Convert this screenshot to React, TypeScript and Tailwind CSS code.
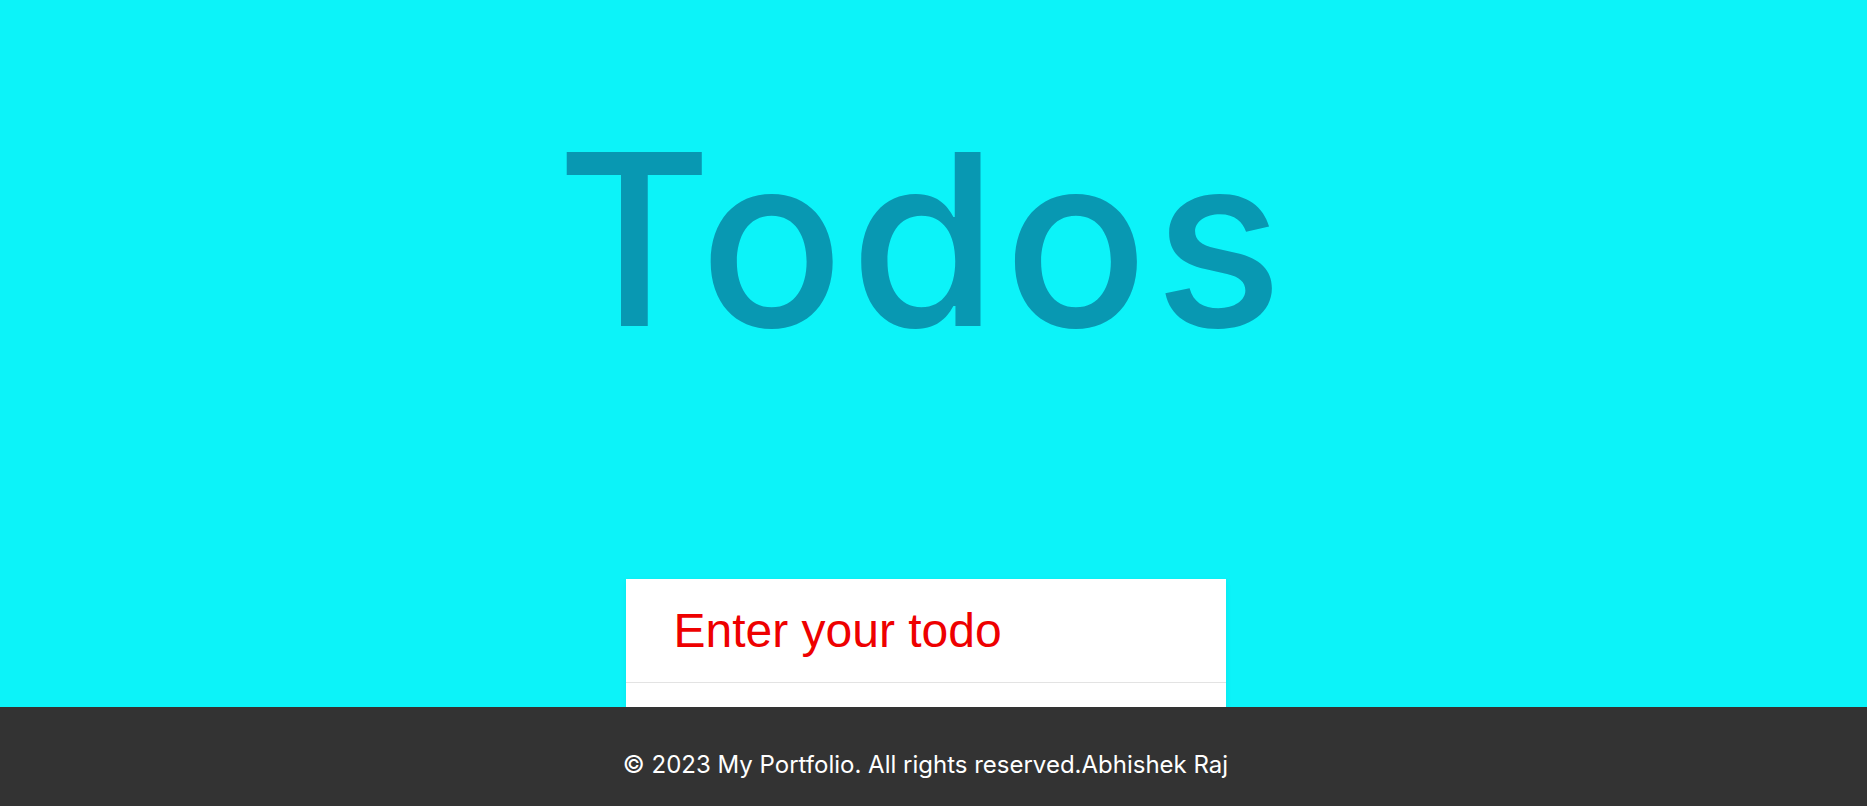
import { useState } from "react";

export default function App() {
  const [todo, setTodo] = useState("");

  return (
    <div className="relative h-screen overflow-hidden bg-[#0cf3f9] font-['Inter',sans-serif]">
      <main className="pr-[16px]">
        <h1 className="pt-[96px] pr-[6px] text-center text-[239px] font-medium leading-[1.2] tracking-[6px] text-[#0898b2]">
          Todos
        </h1>

        <div className="mx-auto mt-[196px] w-[600px] bg-white shadow-[0_2px_6px_rgba(0,0,0,0.06)]">
          <input
            value={todo}
            onChange={(e) => setTodo(e.target.value)}
            placeholder="Enter your todo"
            className="block h-[104px] w-full border-b border-[#e3e3e3] bg-white px-[48px] font-['Liberation_Sans',sans-serif] text-[48px] text-[#ee0000] outline-none placeholder:text-[#ee0000]"
          />
          <div className="h-[120px]" />
        </div>
      </main>

      <footer className="fixed bottom-0 left-0 right-0 flex h-[99px] items-center justify-center bg-[#333333] pt-[16px] pr-[16px]">
        <p className="text-[24px] text-white">
          © 2023 My Portfolio. All rights reserved.Abhishek Raj
        </p>
      </footer>
    </div>
  );
}
